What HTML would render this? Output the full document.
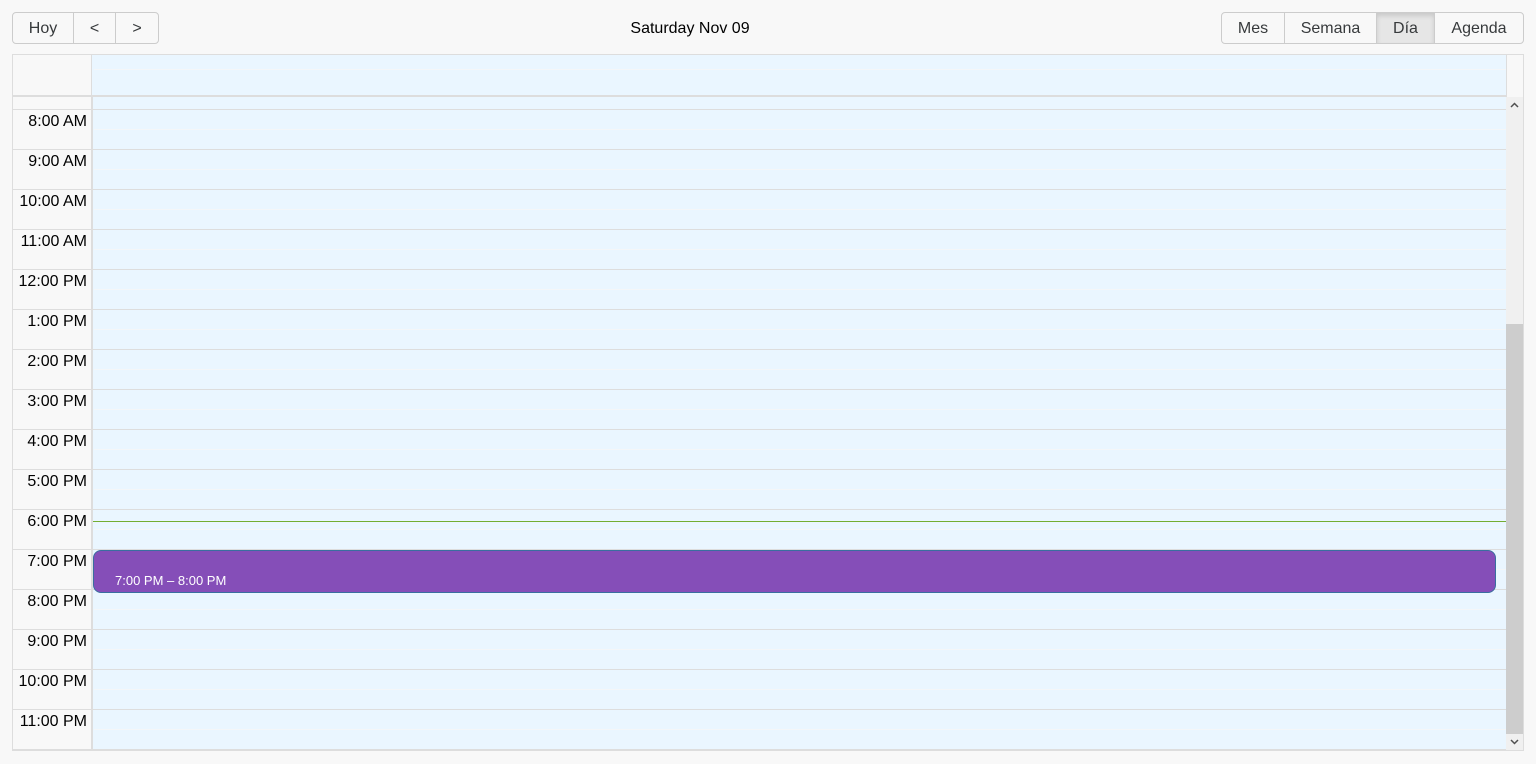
<!DOCTYPE html>
<html><head><meta charset="utf-8"><style>
*{box-sizing:border-box;margin:0;padding:0}
body{width:1536px;height:764px;background:#f8f8f8;font-family:"Liberation Sans",Arial,sans-serif;position:relative;overflow:hidden;color:#000}
.grp{position:absolute;top:12px;height:32px;display:flex;border:1px solid #ccc;border-radius:4px;overflow:hidden}
.grp div{height:30px;line-height:32px;text-align:center;font-size:16px;color:#373a3c;border-right:1px solid #ccc}
.grp div:last-child{border-right:none}
.title{position:absolute;top:20px;left:0;width:1380px;text-align:center;font-size:16px}
.box{position:absolute;left:12px;top:54px;width:1512px;height:697px;border:1px solid #ddd}
.abs{position:absolute}
.lbl{position:absolute;left:0;width:74px;text-align:right;font-size:16px;color:#000}
</style></head><body>
<div class="grp" style="left:12px;width:147px"><div style="width:61px">Hoy</div><div style="width:42px">&lt;</div><div style="width:42px">&gt;</div></div>
<div class="title">Saturday Nov 09</div>
<div class="grp" style="left:1221px;width:303px"><div style="width:63px">Mes</div><div style="width:92px">Semana</div><div style="width:58px;background:#e6e6e6;box-shadow:inset 0 3px 5px rgba(0,0,0,.125)">Día</div><div style="width:88px">Agenda</div></div>
<div class="box">
 <div class="abs" style="left:0;top:0;width:79px;height:41px;background:#f8f8f8;border-right:1px solid #ddd"></div>
 <div class="abs" style="left:79px;top:0;width:1415px;height:41px;background:#eaf6ff;border-right:1px solid #ddd"></div>
 <div class="abs" style="left:0;top:40px;width:1494px;height:2px;background:#ddd"></div>
 <div class="abs" style="left:0;top:42px;width:80px;height:653px;background:#f8f8f8;border-right:2px solid #ddd"></div>
 <div class="abs" style="left:80px;top:42px;width:1413px;height:653px;background:#eaf6ff"></div>
 <div id="rows"></div>
 <div class="abs" style="left:1493px;top:42px;width:17px;height:653px;background:#f0f0f0"></div>
 <div class="abs" style="left:1493px;top:269px;width:17px;height:410px;background:#cdcdcd"></div>
 <svg class="abs" style="left:1496px;top:45px" width="11" height="10"><path d="M2 7 L5.5 3.5 L9 7" fill="none" stroke="#505050" stroke-width="1.5"/></svg>
 <svg class="abs" style="left:1496px;top:682px" width="11" height="10"><path d="M2 3 L5.5 6.5 L9 3" fill="none" stroke="#505050" stroke-width="1.5"/></svg>
 <div class="abs" style="left:80px;top:466px;width:1413px;height:1px;background:#74ad31"></div>
 <div class="abs" style="left:80px;top:495px;width:1403px;height:43px;background:#854eb8;border:1px solid #3a6e9f;border-radius:8px;color:#fff;font-size:13px;padding:22px 0 0 21px">7:00 PM – 8:00 PM</div>
</div>
<script>
var r='',labels=['8:00 AM','9:00 AM','10:00 AM','11:00 AM','12:00 PM','1:00 PM','2:00 PM','3:00 PM','4:00 PM','5:00 PM','6:00 PM','7:00 PM','8:00 PM','9:00 PM','10:00 PM','11:00 PM'];
for(var i=0;i<16;i++){var y=54+40*i;
r+='<div class="abs" style="left:0;top:'+y+'px;width:1493px;height:1px;background:#ddd"></div>';
r+='<div class="abs" style="left:81px;top:'+(y+20)+'px;width:1412px;height:1px;background:#f4f6f8"></div>';
r+='<div class="lbl" style="top:'+(y+4)+'px">'+labels[i]+'</div>';}
r+='<div class="abs" style="left:81px;top:14px;width:1412px;height:1px;background:#f4f6f8"></div>';
r+='<div class="abs" style="left:0;top:694px;width:1493px;height:1px;background:#ddd"></div>';
document.getElementById('rows').innerHTML=r;
</script>
</body></html>
